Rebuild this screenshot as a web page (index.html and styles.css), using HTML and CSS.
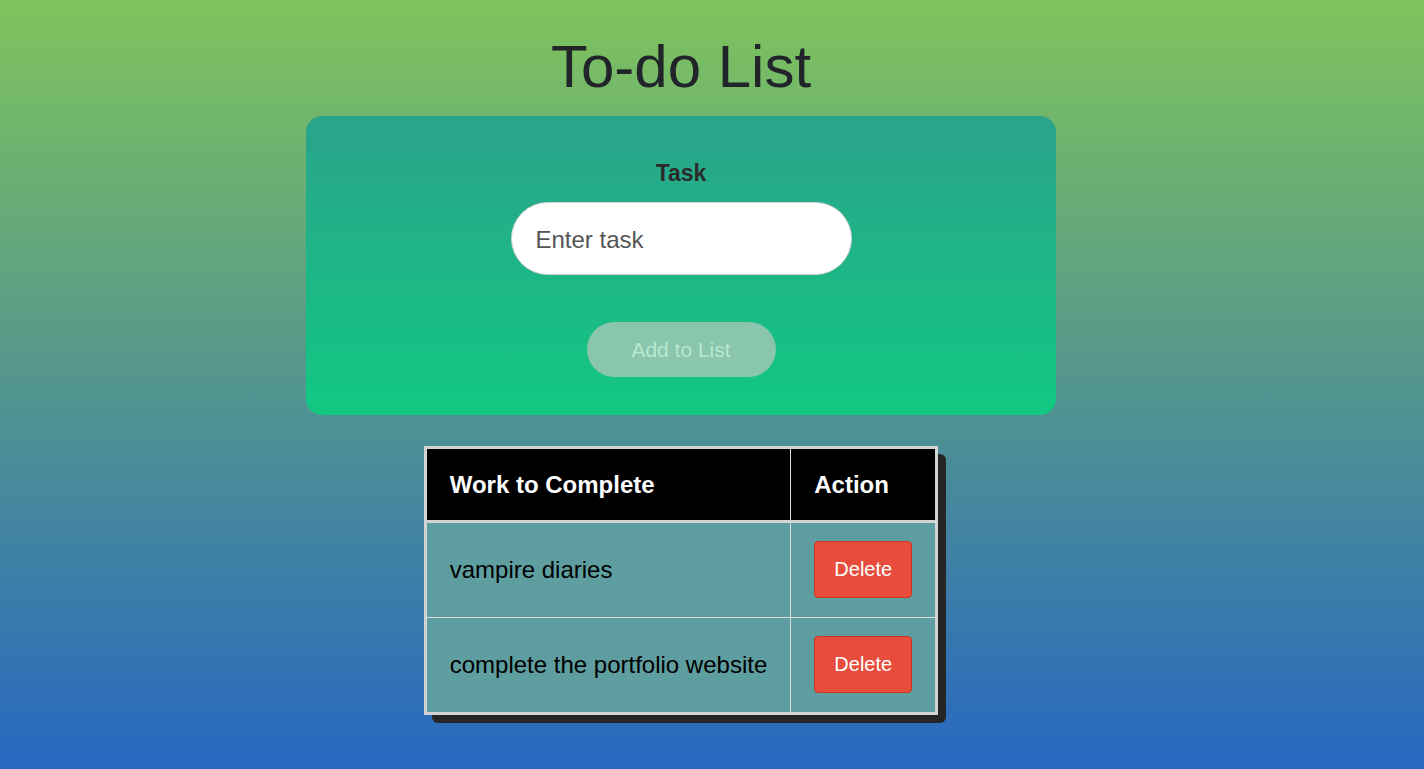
FILE: index.html
```html
<!DOCTYPE html>
<html lang="en">
<head>
<meta charset="utf-8">
<title>To-do List</title>
<link rel="stylesheet" href="styles.css">
</head>
<body>
<div class="page">
  <h1 class="title">To-do List</h1>
  <form class="card">
    <label class="label" for="task">Task</label>
    <input class="task-input" id="task" type="text" placeholder="Enter task">
    <button class="add-btn" type="button" disabled>Add to List</button>
  </form>
  <table class="tasks">
    <thead>
      <tr><th>Work to Complete</th><th>Action</th></tr>
    </thead>
    <tbody>
      <tr><td>vampire diaries</td><td><button class="del-btn" type="button">Delete</button></td></tr>
      <tr><td>complete the portfolio website</td><td><button class="del-btn" type="button">Delete</button></td></tr>
    </tbody>
  </table>
</div>
</body>
</html>
```
FILE: styles.css
```css
html, body {
  margin: 0;
  height: 100%;
}
body {
  background: linear-gradient(to bottom, #7fc45c 0%, #2767c1 100%);
  font-family: "Liberation Sans", Arial, sans-serif;
  color: #212529;
  min-height: 769px;
}
.page {
  width: 1362px;
  display: flex;
  flex-direction: column;
  align-items: center;
  padding-top: 31px;
}
.title {
  margin: 0 0 13px;
  font-size: 60px;
  font-weight: 400;
  line-height: 72px;
  color: #212529;
}
.card {
  width: 750px;
  box-sizing: border-box;
  border-radius: 16px;
  background: linear-gradient(to bottom, #2aa38b 0%, #12c882 100%);
  display: flex;
  flex-direction: column;
  align-items: center;
  padding: 44px 0 38px;
}
.label {
  font-size: 23px;
  font-weight: 700;
  color: #2b2b2b;
  line-height: 26px;
  margin-bottom: 16px;
}
.task-input {
  width: 341px;
  height: 73px;
  box-sizing: border-box;
  border: 1px solid #cfcfcf;
  border-radius: 40px;
  background: #fff;
  padding: 2px 24px 0;
  font-family: "Liberation Sans", Arial, sans-serif;
  font-size: 24px;
  color: #333;
  outline: none;
}
.task-input::placeholder {
  color: #555;
}
.add-btn {
  margin-top: 47px;
  width: 189px;
  height: 55px;
  border: none;
  border-radius: 28px;
  background: #8ac5ad;
  color: #b8e8d2;
  font-family: "Liberation Sans", Arial, sans-serif;
  font-size: 21px;
  padding-top: 2px;
}
.tasks {
  margin-top: 31px;
  border-collapse: collapse;
  border: 3px solid #d4d4d4;
  box-shadow: 8px 8px 0 #262626;
  border-radius: 6px;
  font-size: 24px;
  background: #5f9ea0;
}
.tasks th {
  background: #000;
  color: #fff;
  font-weight: 700;
  text-align: left;
  padding: 22px 23px 22px;
  line-height: 27px;
  border-left: 1px solid #e0e0e0;
  border-bottom: 3px solid #d4d4d4;
}
.tasks td {
  color: #000;
  padding: 18px 23px 19px;
  border-left: 1px solid #dcdcdc;
  border-top: 1px solid #dcdcdc;
  line-height: 27px;
}
.del-btn {
  display: block;
  width: 98px;
  height: 57px;
  border: 1px solid #c8371d;
  border-radius: 4px;
  background: #e74c3c;
  color: #fff;
  font-family: "Liberation Sans", Arial, sans-serif;
  font-size: 20px;
}
```
